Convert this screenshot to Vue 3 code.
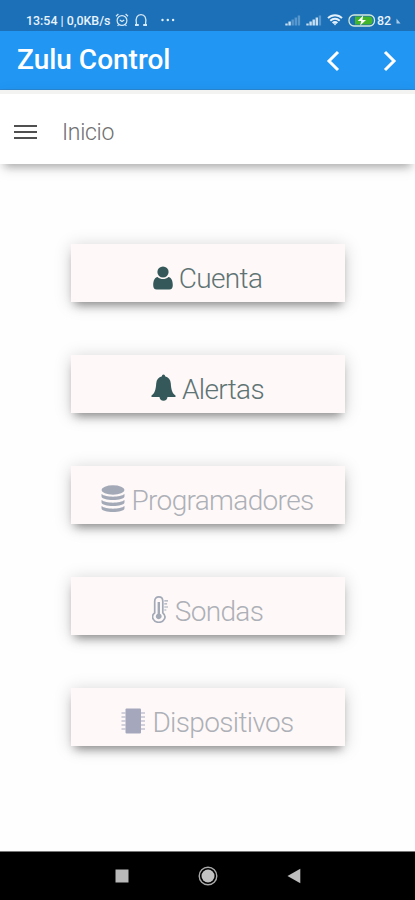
<template>
  <div class="app">
    <header class="status-bar">
      <span class="clock">13:54 | 0,0KB/s</span>
      <svg class="alarm" width="14" height="14" viewBox="0 0 14 14" fill="none" stroke="#d8e9f8" stroke-width="1.2">
        <circle cx="7" cy="7.5" r="4.9" />
        <path d="M1 3.2 3.4 1M13 3.2 10.6 1M4.8 7l2.2 1.6L9.2 7M3.6 11.6l-1 1.4M10.4 11.6l1 1.4" />
      </svg>
      <svg class="headset" width="14" height="14" viewBox="0 0 14 14" fill="none" stroke="#d8e9f8" stroke-width="1.3">
        <path d="M4.6 12H2.4V10.2C1.5 5 3 1.6 7 1.6s5.5 3.4 4.6 8.6V12H9.4" />
        <path d="M1 12h3.6M9.4 12H13" stroke-width="2" />
      </svg>
      <svg class="dots" width="14" height="4" viewBox="0 0 14 4" fill="#e4f0fb">
        <circle cx="1.5" cy="2" r="1.2" />
        <circle cx="6.8" cy="2" r="1.2" />
        <circle cx="12.1" cy="2" r="1.2" />
      </svg>
      <span class="spacer"></span>
      <svg v-for="level in [2, 4]" :key="level" class="signal" width="16" height="11" viewBox="0 0 16 11">
        <rect
          v-for="n in 5"
          :key="n"
          :x="(n - 1) * 3.1 + 0.3"
          :y="10.5 - n * 2"
          width="2.4"
          :height="n * 2"
          fill="#e8f3fc"
          :opacity="n <= level ? 0.85 : 0.3"
        />
      </svg>
      <svg class="wifi" width="16" height="12" viewBox="0 0 16 12" fill="none" stroke="#e4f1fb" stroke-width="1.9">
        <path d="M1 4.2C5 .2 11 .2 15 4.2M3.3 6.7c2.7-2.6 6.7-2.6 9.4 0M5.6 9c1.4-1.3 3.4-1.3 4.8 0" />
        <path d="M6.3 9.2h3.4L8 11.5z" fill="#e4f1fb" stroke="none" />
      </svg>
      <svg class="battery" width="28" height="13" viewBox="0 0 28 13">
        <rect x="1" y="1" width="25.5" height="11" rx="5" fill="#1d6fb4" stroke="#d5ead9" stroke-width="1.3" />
        <path d="M7 2.5h14.5c4.2 0 4.2 8 0 8H7z" fill="#43b52b" />
        <path d="M15.2 1.5 9.7 7h3.500l-1 4.500L18 6h-3.600z" fill="#fff" />
      </svg>
      <span class="percent">82</span>
      <svg class="corner" width="5" height="6" viewBox="0 0 5 6"><path d="M.5.5 4.5 5.5h-4z" fill="#a9cbea" /></svg>
    </header>

    <div class="title-bar">
      <h1>Zulu Control</h1>
      <svg class="prev" width="14" height="22" viewBox="0 0 14 22" fill="none" stroke="#fff" stroke-width="3">
        <path d="M12 2 3 11l9 9" />
      </svg>
      <svg class="next" width="14" height="22" viewBox="0 0 14 22" fill="none" stroke="#fff" stroke-width="3">
        <path d="m2 2 9 9-9 9" />
      </svg>
    </div>

    <nav class="toolbar">
      <div class="hamburger"><i></i><i></i><i></i></div>
      <span>Inicio</span>
    </nav>

    <main class="menu">
      <button
        v-for="item in items"
        :key="item.id"
        class="card"
        :class="[item.id, { disabled: item.disabled }]"
      >
        <svg
          class="icon"
          :width="item.width"
          :height="item.height"
          :viewBox="`0 0 ${item.width} ${item.height}`"
          fill="currentColor"
        >
          <template v-if="item.id === 'cuenta'">
            <circle cx="10" cy="6" r="5.6" />
            <path d="M4.6 10.9c3 2.8 7.800 2.800 10.800 0 2.700.3 4.400 3.400 4.400 8.300 0 2.700-1.200 4.300-3.500 4.300H3.700C1.400 23.500.2 21.900.2 19.200c0-4.900 1.700-8 4.400-8.300z" />
          </template>
          <path
            v-else-if="item.id === 'alertas'"
            d="M12.500.5c1 0 1.600.7 1.500 1.800 3.500.8 5.500 3.400 5.800 7.200.4 6.200 1.200 9.400 4.700 12V23h-8c-.2 2.300-1.700 3.800-4 3.800S8.700 25.300 8.500 23h-8v-1.500c3.500-2.600 4.300-5.800 4.700-12 .3-3.800 2.300-6.400 5.800-7.200-.1-1.100.5-1.800 1.500-1.800z"
          />
          <template v-else-if="item.id === 'programadores'">
            <ellipse cx="12" cy="5" rx="11.5" ry="4.7" />
            <path d="M.5 9c4 3.500 19 3.500 23 0v2.200c0 5-23 5-23 0zM.5 15c4 3.500 19 3.500 23 0v2.200c0 5-23 5-23 0zM.5 21c4 3.500 19 3.500 23 0v2.200c0 5-23 5-23 0z" />
          </template>
          <template v-else-if="item.id === 'sondas'">
            <path
              d="M2.700 16.800V5.200c0-5.700 8.100-5.700 8.100 0v11.600c4.600 3.800 1.200 9.500-4 9.500s-8.700-5.700-4.100-9.500z"
              fill="none"
              stroke="currentColor"
              stroke-width="1.7"
            />
            <path d="M5.600 6h2.400v11.800c3.300 2.200 1.200 5.400-1.300 5.400s-4.400-3.200-1.100-5.400z" />
            <path d="M12.300 4.800H16M12.300 7.900h2.800M12.300 11H16M12.300 14h2" stroke="currentColor" stroke-width="1.2" />
          </template>
          <template v-else>
            <rect x="4.5" y="0.5" width="15.5" height="25" rx="1" />
            <path
              d="M.5 5h4M.5 9h4M.5 13h4M.5 17h4M.5 21h4M20 5h4M20 9h4M20 13h4M20 17h4M20 21h4"
              stroke="currentColor"
              stroke-width="1.2"
            />
          </template>
        </svg>
        <span class="label">{{ item.label }}</span>
      </button>
    </main>

    <footer class="nav-bar">
      <svg width="14" height="14" viewBox="0 0 14 14"><rect x=".5" y=".5" width="13" height="13" fill="#b9b9b9" /></svg>
      <svg width="20" height="20" viewBox="0 0 20 20">
        <circle cx="10" cy="10" r="8.8" fill="none" stroke="#aaa" stroke-width="1.4" />
        <circle cx="10" cy="10" r="6.5" fill="#c2c2c2" />
      </svg>
      <svg width="14" height="16" viewBox="0 0 14 16"><path d="M13.300.8v14.400L.5 8z" fill="#bdbdbd" /></svg>
    </footer>
  </div>
</template>

<script setup>
const items = [
  { id: 'cuenta', label: 'Cuenta', width: 20, height: 24, disabled: false },
  { id: 'alertas', label: 'Alertas', width: 25, height: 27, disabled: false },
  { id: 'programadores', label: 'Programadores', width: 24, height: 27, disabled: true },
  { id: 'sondas', label: 'Sondas', width: 17, height: 27, disabled: true },
  { id: 'dispositivos', label: 'Dispositivos', width: 25, height: 26, disabled: true }
]
</script>

<style>
body {
  margin: 0;
  background: #fff;
}
</style>

<style scoped>
.app {
  width: 100%;
  height: 900px;
  display: flex;
  flex-direction: column;
  background: #fefefe;
  font-family: Roboto, 'Liberation Sans', sans-serif;
  overflow: hidden;
}

.app svg {
  display: block;
  flex: none;
}

.status-bar {
  height: 31px;
  flex: none;
  display: flex;
  align-items: center;
  box-sizing: border-box;
  padding: 9px 14px 0 26px;
  background: #1b70b8;
  color: #e8f3fc;
  font-size: 12.4px;
  font-weight: 500;
}

.clock {
  width: 89px;
  white-space: nowrap;
}

.headset {
  margin-left: 5px;
}

.dots {
  margin-left: 13px;
}

.spacer {
  flex: 1;
}

.signal {
  margin-right: 5px;
}

.wifi {
  margin-right: 5px;
}

.percent {
  margin-left: 1px;
}

.corner {
  margin: 2px 0 0 5px;
}

.title-bar {
  height: 59px;
  flex: none;
  display: flex;
  align-items: center;
  box-sizing: border-box;
  padding: 2px 18px 0 17px;
  background: #2196f3;
  border-bottom: 1px solid #2b86d2;
}

h1 {
  flex: 1;
  margin: 0 0 2px;
  color: #fff;
  font-size: 28px;
  font-weight: 500;
  line-height: 32px;
}

.next {
  margin-left: 43px;
}

.toolbar {
  height: 74px;
  flex: none;
  display: flex;
  align-items: center;
  box-sizing: border-box;
  padding: 6px 0 0 14px;
  background: #fff;
  border-top: 4px solid #f3f3f2;
  box-shadow: 0 8px 8px -5px rgba(0, 0, 0, 0.26), 0 4px 14px rgba(0, 0, 0, 0.1);
  color: #707070;
  font-size: 23px;
  font-weight: 300;
  letter-spacing: -0.3px;
}

.hamburger {
  width: 23px;
  margin-right: 25px;
  display: flex;
  flex-direction: column;
  gap: 4px;
}

.hamburger i {
  height: 2px;
  background: #505050;
}

.menu {
  flex: 1;
  display: flex;
  flex-direction: column;
  align-items: center;
  gap: 53px;
  padding-top: 80px;
}

.card {
  width: 274px;
  height: 58px;
  flex: none;
  display: flex;
  align-items: flex-end;
  justify-content: center;
  gap: 6px;
  margin: 0;
  padding: 0 0 7px;
  border: 0;
  background: #fef9f8;
  box-shadow: 0 7px 9px -4px rgba(0, 0, 0, 0.38), 0 2px 16px rgba(0, 0, 0, 0.18);
  color: #35595a;
  font-family: inherit;
  font-size: 28px;
  font-weight: 300;
  letter-spacing: -0.65px;
  line-height: 33px;
}

.card .icon {
  margin-bottom: 5px;
}

.label {
  color: #607374;
}

.disabled {
  color: #a3a9b7;
}

.dispositivos {
  color: #a5a8bd;
}

.disabled .label {
  color: #adb0b7;
}

.nav-bar {
  height: 49px;
  flex: none;
  display: flex;
  align-items: center;
  justify-content: center;
  gap: 69px;
  box-sizing: border-box;
  background: #000;
  border-top: 1px solid #777;
}
</style>
